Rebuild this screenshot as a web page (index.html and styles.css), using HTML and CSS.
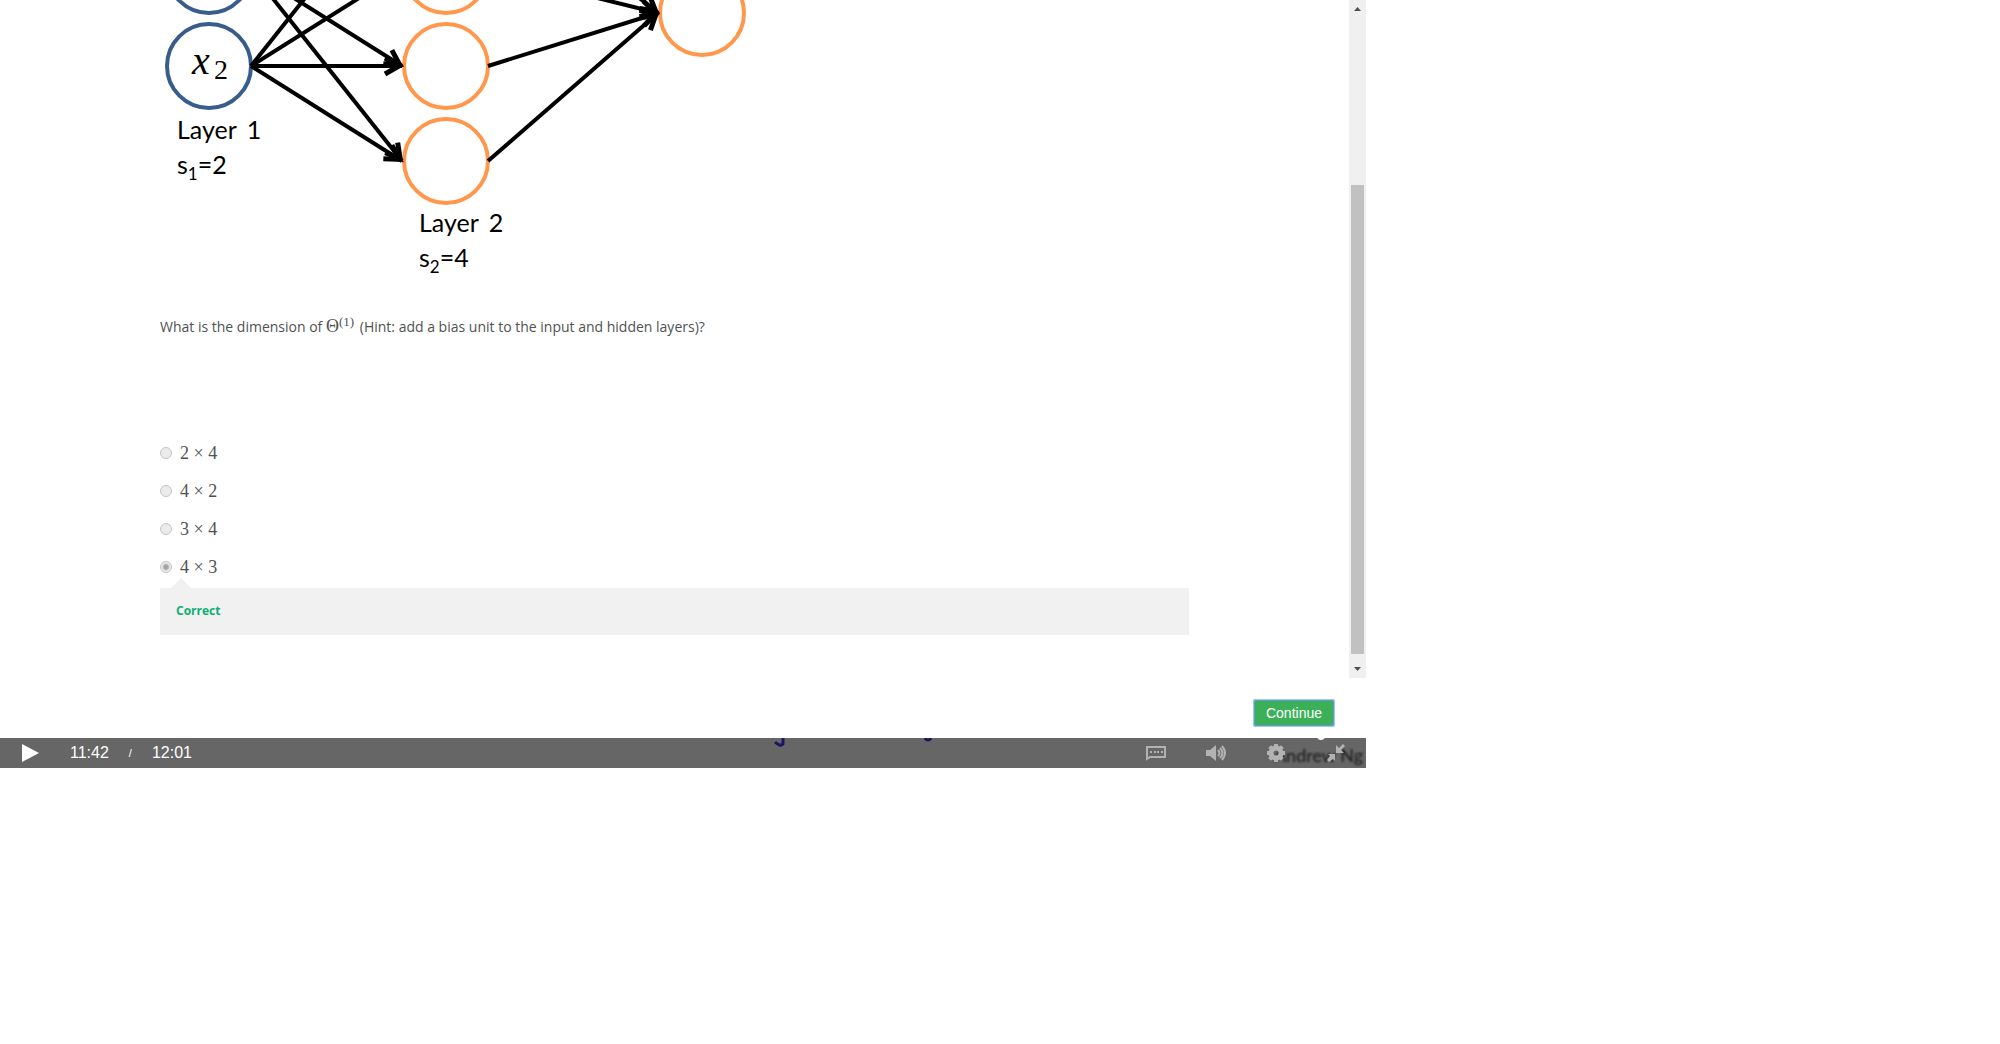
FILE: index.html
```html
<!DOCTYPE html>
<html lang="en">
<head>
<meta charset="utf-8">
<title>Video quiz</title>
<link rel="stylesheet" href="styles.css">
</head>
<body>
<main class="player">
  <div class="quiz">
    <form class="quiz-content" id="quiz">
      <svg class="network" width="640" height="300" viewBox="160 0 640 300" role="img" aria-label="Neural network with two inputs, four hidden units and one output">
        <defs>
          <marker id="arrow" markerUnits="userSpaceOnUse" markerWidth="24" markerHeight="24" refX="18" refY="12" orient="auto" overflow="visible">
            <path class="head" d="M1 4 L15 12 L1 20"/>
          </marker>
        </defs>
        <g class="unit input">
          <circle cx="209" cy="-29" r="42"/>
          <circle cx="209" cy="66" r="42"/>
        </g>
        <g class="unit">
          <circle cx="446" cy="-29" r="42"/>
          <circle cx="446" cy="66" r="42"/>
          <circle cx="446" cy="161" r="42"/>
          <circle cx="702" cy="13" r="42"/>
        </g>
        <g class="edge">
          <path d="M251 66 L402 -124"/>
          <path d="M251 66 L402 -29"/>
          <path d="M251 66 L402 66"/>
          <path d="M251 66 L402 161"/>
          <path d="M251 -29 L402 66"/>
          <path d="M251 -29 L402 161"/>
          <path d="M488 -124 L658 13"/>
          <path d="M488 -29 L658 13"/>
          <path d="M488 66 L658 13"/>
          <path d="M488 161 L658 13"/>
        </g>
        <text class="variable" x="192" y="74">x</text>
        <text class="variable-index" x="214" y="79">2</text>
        <text class="label" x="177" y="139">Layer <tspan dx="4">1</tspan></text>
        <text class="label" x="177" y="174">s<tspan class="index" dy="6">1</tspan><tspan dy="-6">=2</tspan></text>
        <text class="label" x="419" y="232">Layer <tspan dx="4">2</tspan></text>
        <text class="label" x="419" y="267">s<tspan class="index" dy="6">2</tspan><tspan dy="-6">=4</tspan></text>
      </svg>
      <p class="question">What is the dimension of <span class="math">Θ<sup>(1)</sup></span> (Hint: add a bias unit to the input and hidden layers)?</p>
      <div class="options">
        <label class="option"><input type="radio" name="answer"><span>2 × 4</span></label>
        <label class="option"><input type="radio" name="answer"><span>4 × 2</span></label>
        <label class="option"><input type="radio" name="answer"><span>3 × 4</span></label>
        <label class="option"><input type="radio" name="answer" checked><span>4 × 3</span></label>
      </div>
      <div class="feedback">Correct</div>
    </form>
    <div class="scrollbar" aria-hidden="true">
      <svg width="17" height="17" viewBox="0 0 17 17"><path d="M5 11h7L8.500 7z"/></svg>
      <div class="track"><div class="thumb"></div></div>
      <svg width="17" height="17" viewBox="0 0 17 17"><path d="M5 6h7L8.500 10z"/></svg>
    </div>
  </div>
  <div class="actions">
    <button class="continue" type="submit" form="quiz">Continue</button>
  </div>
  <div class="controls">
    <svg class="ink" width="160" height="12" viewBox="0 0 160 12" aria-hidden="true">
      <path d="M1 4Q6 9 9 6V0M151 0Q154 4 157 0"/>
    </svg>
    <span class="credit">Andrew Ng</span>
    <span class="knob"></span>
    <button class="control" type="button" aria-label="Play"><svg width="18" height="18" viewBox="0 0 18 18"><path fill="#fff" d="M1 0l17 9-17 9z"/></svg></button>
    <div class="time"><span>11:42</span><span class="slash">/</span><span>12:01</span></div>
    <button class="control" type="button" aria-label="Subtitles"><svg width="22" height="18" viewBox="0 0 22 18"><path fill="none" stroke="#b2b2b2" stroke-width="2" d="M2 3h18v10H5l-3 2z"/><path fill="#b2b2b2" d="M5 7h2v2H5zM9 7h2v2H9zM12 7h2v2h-2zM16 7h2v2h-2z"/></svg></button>
    <button class="control" type="button" aria-label="Volume"><svg width="20" height="18" viewBox="0 0 20 18"><path fill="#b2b2b2" d="M0 6h4l6-5v16l-6-5H0z"/><path fill="none" stroke="#b2b2b2" stroke-width="2" d="M12 6q3 3 0 6M14 4q5 5 0 10M16 2q6 7 0 14"/></svg></button>
    <button class="control" type="button" aria-label="Settings"><svg width="18" height="18" viewBox="-9 -9 18 18"><path fill="none" stroke="#b2b2b2" stroke-width="4" d="M0-9V-5M0 9V5M-9 0H-5M9 0H5M-6.400-6.400l3 3M6.400 6.400l-3-3M-6.400 6.400l3-3M6.400-6.400l-3 3"/><circle r="5" fill="none" stroke="#b2b2b2" stroke-width="5"/></svg></button>
    <button class="control" type="button" aria-label="Exit full screen"><svg width="18" height="18" viewBox="0 0 18 18"><path fill="#b2b2b2" d="M9 1v8h8l-3-3 4-4-2-2-4 4zM1 10h7v7l-2-2-4 3-2-2 3-4z"/></svg></button>
  </div>
</main>
</body>
</html>
```
FILE: styles.css
```css
* { box-sizing: border-box; }
body {
  margin: 0;
  background: #fff;
  color: #505252;
  font: 14px/20px "Open Sans", sans-serif;
}
button { font: inherit; cursor: pointer; }
.player { max-width: 1366px; }
.quiz { display: flex; }
.quiz-content { flex: 1; padding: 0 160px 43px; }

.network { display: block; max-width: 100%; margin-bottom: 16px; overflow: visible; }
.unit { fill: none; stroke: #ff984c; stroke-width: 4; }
.input { stroke: #385d8a; }
.edge path { fill: none; stroke: #000; stroke-width: 4; marker-end: url(#arrow); }
.head { fill: none; stroke: #000; stroke-width: 5; }
.label { fill: #000; font: 25px Lato, sans-serif; }
.index { font-size: 17px; }
.variable { fill: #000; font: italic 40px "Liberation Serif", serif; }
.variable-index { fill: #000; font: 28px "Liberation Serif", serif; }

.question { margin: 0 0 106px; }
.math { font: 18px/20px "Liberation Serif", serif; margin-right: 2px; }
.math sup { font-size: 13px; line-height: 1px; vertical-align: 6px; }
.options { display: grid; gap: 18px; }
.option {
  display: flex;
  align-items: center;
  gap: 8px;
  height: 20px;
  font: 18px/20px "Liberation Serif", serif;
}
.option input {
  appearance: none;
  width: 12px;
  height: 12px;
  margin: 0;
  border: 1px solid #c4c4c4;
  border-radius: 50%;
  background: #ebebeb;
}
.option input:checked { background: radial-gradient(circle, #a6a6a6 2px, #ebebeb 4px); }
.feedback {
  position: relative;
  margin-top: 11px;
  padding: 13px 16px 14px;
  background: #f1f1f1;
  color: #0caf74;
  font-size: 12px;
  font-weight: 700;
}
.feedback::before {
  content: "";
  position: absolute;
  left: 11px;
  bottom: 100%;
  border: 10px solid transparent;
  border-top-width: 0;
  border-bottom-color: #f1f1f1;
}

.scrollbar { display: flex; flex-direction: column; width: 17px; background: #f0f0f0; }
.scrollbar path { fill: #505050; }
.track { display: flex; flex: 1; flex-direction: column; justify-content: flex-end; padding: 0 2px 7px; }
.thumb { flex: 0 0 469px; background: #c1c1c1; }

.actions { display: flex; justify-content: flex-end; padding: 21px 31px 11px; }
.continue {
  width: 82px;
  height: 28px;
  padding: 0;
  border: 2px solid #579fc6;
  border-radius: 3px;
  outline: 1px solid #a3c5fb;
  outline-offset: -1px;
  background: #3bb058;
  color: #fff;
  font: 14px/20px "Liberation Sans", sans-serif;
}

.controls {
  position: relative;
  display: flex;
  height: 30px;
  overflow: hidden;
  background: #666;
  color: #fff;
  font: 16px/30px "Liberation Sans", sans-serif;
}
.control {
  z-index: 1;
  display: grid;
  place-items: center;
  width: 60px;
  padding: 0;
  border: 0;
  background: none;
}
.time { display: flex; flex: 1; gap: 20px; padding-left: 10px; }
.slash { font-size: 11px; }
.ink { position: absolute; left: 774px; top: 0; }
.ink path { fill: none; stroke: #1c1464; stroke-width: 3; }
.credit {
  position: absolute;
  top: 2px;
  right: 3px;
  color: #181818;
  font: 18px/30px Lato, sans-serif;
  filter: blur(1px);
}
.knob {
  position: absolute;
  top: -6px;
  right: 41px;
  width: 8px;
  height: 8px;
  border-radius: 50%;
  background: #fff;
}
```
